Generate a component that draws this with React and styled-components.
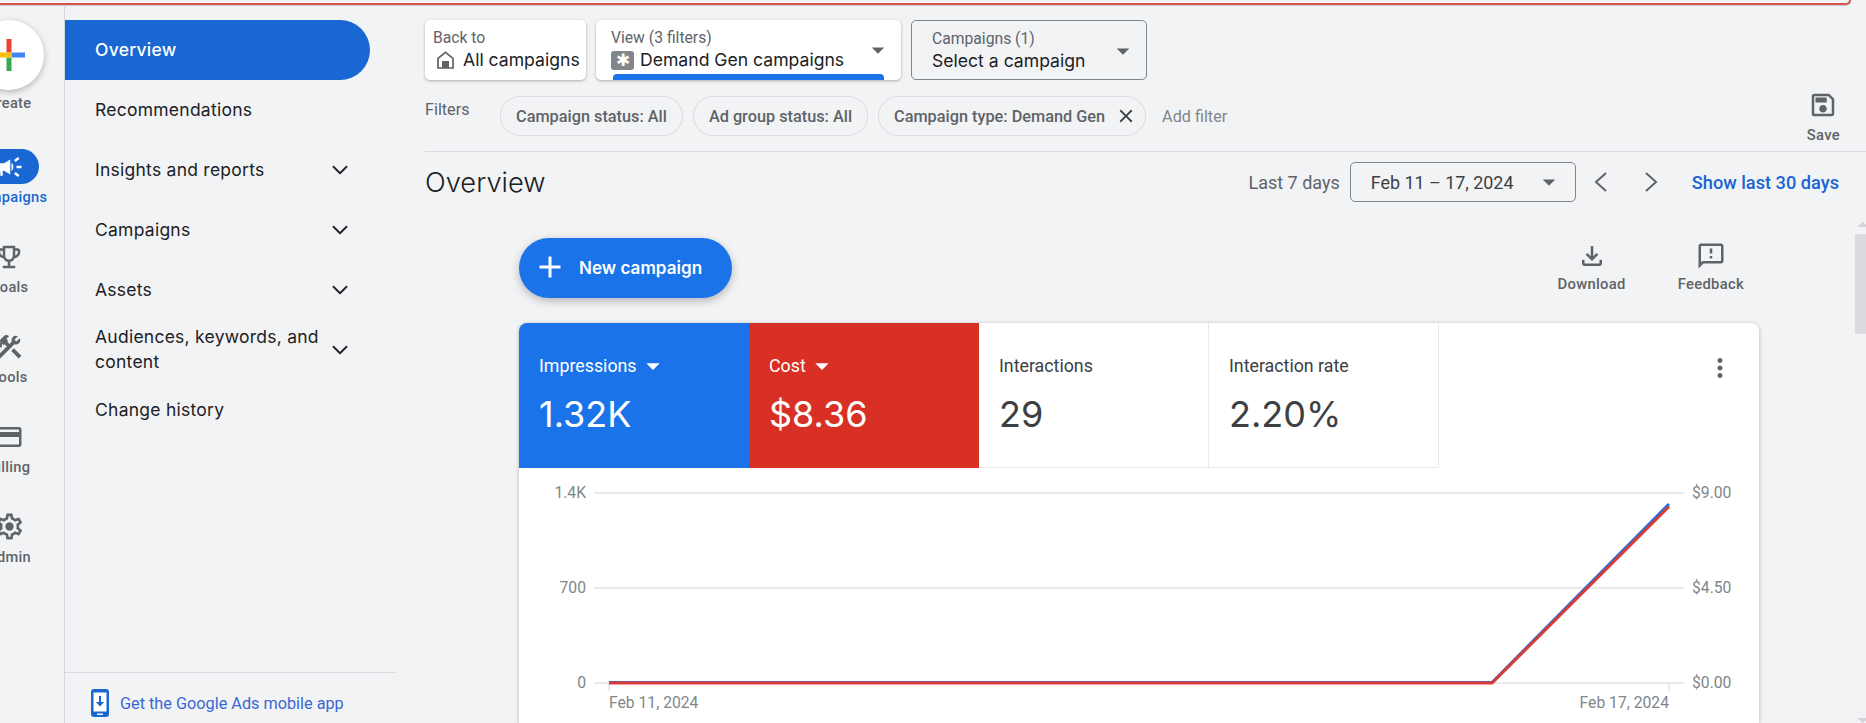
import React from "react";
import styled, { createGlobalStyle } from "styled-components";
import {
  MdArrowDropDown,
  MdCampaign,
  MdAdd,
  MdClose,
  MdConstruction,
  MdMoreVert,
  MdOutlineCreditCard,
  MdOutlineEmojiEvents,
  MdOutlineFeedback,
  MdOutlineFileDownload,
  MdOutlineSave,
} from "react-icons/md";
import { ChevronDown } from "lucide-react";

const sans = `Inter, "Noto Sans", sans-serif`;
const roboto = `Roboto, "Liberation Sans", sans-serif`;

const GlobalStyle = createGlobalStyle`
  html, body {
    margin: 0;
    padding: 0;
    height: 100%;
    overflow: hidden;
    background: #f1f3f4;
  }
  * { box-sizing: border-box; }
`;

const Page = styled.div`
  position: relative;
  width: 1866px;
  height: 723px;
  overflow: hidden;
  display: flex;
  flex-direction: column;
  background: #f2f3f5;
  font-family: ${roboto};
`;

const AlertEdge = styled.div`
  flex: none;
  width: 1851px;
  height: 5px;
  border-bottom: 2px solid #d9534f;
  border-right: 2px solid #d9534f;
  border-bottom-right-radius: 6px;
  box-shadow: 0 1px 0 #c9ccd0;
`;

const Body = styled.div`
  flex: 1;
  min-height: 0;
  display: flex;
`;

const Rail = styled.aside`
  flex: none;
  width: 65px;
  overflow: hidden;
  border-right: 1px solid #d5d7da;
`;

const RailInner = styled.div`
  width: 110px;
  margin-left: -46px;
  padding-top: 15px;
  display: flex;
  flex-direction: column;
  align-items: center;
`;

const CreateCircle = styled.div`
  width: 70px;
  height: 70px;
  border-radius: 50%;
  background: #fff;
  box-shadow: 0 2px 6px rgba(60, 64, 67, 0.35);
  display: flex;
  align-items: center;
  justify-content: center;
`;

const RailItem = styled.div`
  width: 110px;
  height: 90px;
  display: flex;
  flex-direction: column;
  align-items: center;
  flex: none;
`;

const CreateItem = styled(RailItem)`
  height: 129px;
`;

const RailIcon = styled.div`
  width: 60px;
  height: 35px;
  flex: none;
  border-radius: 18px;
  display: flex;
  align-items: center;
  justify-content: center;
  color: ${(p) => (p.$active ? "#fff" : "#5f6368")};
  background: ${(p) => (p.$active ? "#1967d2" : "transparent")};
`;

const RailLabel = styled.div`
  margin-top: 3px;
  font-size: 14.6px;
  line-height: 20px;
  font-weight: 500;
  letter-spacing: 0.3px;
  white-space: nowrap;
  color: ${(p) => (p.$active ? "#1967d2" : "#5f6368")};
`;

const Nav = styled.nav`
  flex: none;
  width: 331px;
  padding-top: 15px;
  display: flex;
  flex-direction: column;
`;

const NavItem = styled.div`
  flex: none;
  width: ${(p) => (p.$active ? "305px" : "100%")};
  height: 60px;
  padding: 0 43px 2px 30px;
  display: flex;
  align-items: center;
  justify-content: space-between;
  font-family: ${sans};
  font-size: 17.5px;
  line-height: 25px;
  letter-spacing: 0.25px;
  color: ${(p) => (p.$active ? "#fff" : "#202124")};
  font-weight: ${(p) => (p.$active ? 500 : 400)};
  background: ${(p) => (p.$active ? "#1967d2" : "transparent")};
  border-radius: ${(p) => (p.$active ? "0 30px 30px 0" : "0")};
`;

const NavText = styled.span`
  max-width: 230px;
`;

const NavChevron = styled(ChevronDown)`
  flex: none;
  margin-top: 2px;
`;

const NavFooter = styled.div`
  margin-top: auto;
  height: 51px;
  padding: 10px 0 0 26px;
  border-top: 1px solid #d9dadd;
  display: flex;
  align-items: center;
  gap: 11px;
  font-size: 16.25px;
  color: #3a67d1;
`;

const Main = styled.main`
  flex: 1;
  min-width: 0;
  padding: 15px 26px 0 29px;
`;

const SelectorRow = styled.div`
  display: flex;
  gap: 10px;
`;

const SelectorCard = styled.div`
  height: 60px;
  width: ${(p) => p.$width}px;
  padding: 8px 8px 0 ${(p) => p.$inset}px;
  border-radius: 5px;
  display: flex;
  flex-direction: column;
  color: #202124;
  background: ${(p) => (p.$outlined ? "transparent" : "#fff")};
  border: ${(p) => (p.$outlined ? "1px solid #80868b" : "none")};
  box-shadow: ${(p) =>
    p.$outlined ? "none" : "0 1px 3px rgba(60, 64, 67, 0.4)"};
`;

const CardTop = styled.div`
  display: flex;
  align-items: center;
  justify-content: space-between;
`;

const CardCaption = styled.div`
  font-size: 15.7px;
  line-height: 20px;
  color: #5f6368;
`;

const CardValue = styled.div`
  display: flex;
  align-items: center;
  gap: 6px;
  font-family: ${sans};
  font-size: 17.6px;
  line-height: 24px;
  white-space: nowrap;
`;

const HomeGlyph = styled.svg`
  flex: none;
  margin: 0 3px 0 4px;
  color: #5f6368;
`;

const Caret = styled(MdArrowDropDown)`
  flex: none;
  color: #5f6368;
`;

const GemBadge = styled.span`
  width: 23px;
  height: 19px;
  border-radius: 3px;
  background: #80868b;
  color: #fff;
  display: flex;
  align-items: center;
  justify-content: center;
  font-size: 17px;
  line-height: 19px;
`;

const ActiveBar = styled.div`
  margin-top: auto;
  margin-left: 2px;
  width: 271px;
  height: 6px;
  background: #1a73e8;
  border-radius: 4px 4px 0 0;
`;

const FilterRow = styled.div`
  margin: 16px -26px 0 0;
  padding-right: 26px;
  height: 56px;
  border-bottom: 1px solid #d9dadd;
  display: flex;
  position: relative;
`;

const FilterLabel = styled.div`
  width: 75px;
  font-size: 16.2px;
  line-height: 27px;
  color: #5f6368;
`;

const Chip = styled.div`
  height: 40px;
  margin-right: 10px;
  padding: 0 ${(p) => (p.$closable ? "8px" : "15px")} 0 15px;
  border: 1px solid #dadce0;
  border-radius: 20px;
  display: flex;
  align-items: center;
  gap: 10px;
  font-size: 16.3px;
  font-weight: 500;
  color: #5f6368;
  white-space: nowrap;
`;

const AddFilter = styled.div`
  margin-left: 6px;
  height: 40px;
  display: flex;
  align-items: center;
  font-size: 16.2px;
  color: #80868b;
`;

const SaveAction = styled.div`
  margin-left: auto;
  margin-top: -6px;
`;

const Action = styled.div`
  display: flex;
  flex-direction: column;
  align-items: center;
  gap: ${(p) => p.$gap}px;
  font-size: 14.8px;
  line-height: 20px;
  font-weight: 500;
  letter-spacing: 0.3px;
  color: #5f6368;
`;

const HeaderRow = styled.div`
  margin-top: 10px;
  height: 40px;
  display: flex;
  align-items: center;
`;

const Title = styled.h1`
  margin: 0 auto 0 0;
  font-family: ${sans};
  font-size: 27.3px;
  font-weight: 300;
  color: #202124;
`;

const RangeLabel = styled.div`
  margin-right: 10px;
  font-size: 18px;
  color: #5f6368;
`;

const DateSelect = styled.div`
  width: 226px;
  height: 40px;
  padding: 0 11px 0 20px;
  border: 1px solid #80868b;
  border-radius: 5px;
  display: flex;
  align-items: center;
  justify-content: space-between;
  font-size: 17.9px;
  color: #3c4043;
`;

const PagerIcon = styled.svg`
  margin-left: ${(p) => p.$gap}px;
  flex: none;
  color: #5f6368;
`;

const RangeLink = styled.div`
  margin: 0 1px 0 34px;
  font-size: 18.2px;
  font-weight: 500;
  color: #1a63d3;
`;

const Content = styled.section`
  margin-left: 94px;
  width: 1240px;
`;

const Toolbar = styled.div`
  margin-top: 36px;
  height: 60px;
  display: flex;
  align-items: center;
`;

const NewCampaign = styled.div`
  width: 213px;
  height: 60px;
  padding: 0 0 2px 13px;
  margin-right: auto;
  border-radius: 30px;
  background: #1a73e8;
  color: #fff;
  box-shadow: 0 3px 8px rgba(60, 64, 67, 0.35);
  display: flex;
  align-items: center;
  gap: 11px;
  font-family: ${sans};
  font-size: 17.1px;
  font-weight: 600;
`;

const ToolbarActions = styled.div`
  display: flex;
  gap: 52px;
  margin: -1px 15px 0 0;
`;

const Card = styled.div`
  margin-top: 25px;
  background: #fff;
  border-radius: 8px 8px 0 0;
  box-shadow: 0 1px 4px rgba(60, 64, 67, 0.35);
`;

const TabRow = styled.div`
  display: flex;
  height: 145px;
  position: relative;
`;

const Tab = styled.div`
  width: 230px;
  padding: 32px 0 0 20px;
  color: ${(p) => (p.$bg ? "#fff" : "#3c4043")};
  background: ${(p) => p.$bg || "#fff"};
  border-right: ${(p) => (p.$bg ? "none" : "1px solid #e8eaed")};
  border-bottom: ${(p) => (p.$bg ? "none" : "1px solid #e8eaed")};
  border-top-left-radius: ${(p) => (p.$first ? "8px" : "0")};
`;

const TabLabel = styled.div`
  height: 22px;
  display: flex;
  align-items: center;
  font-size: 17.8px;
  line-height: 22px;
`;

const TabValue = styled.div`
  margin-top: 13px;
  font-family: ${sans};
  font-size: 36px;
  line-height: 48px;
  font-weight: 400;
`;

const Kebab = styled.div`
  margin-left: auto;
  padding: 30px 24px 0 0;
  color: #5f6368;
`;

const Chart = styled.svg`
  display: block;
  font-family: ${roboto};
  font-size: 15.7px;
  fill: #80868b;
`;

const ScrollThumb = styled.div`
  position: absolute;
  right: 0;
  top: 234px;
  width: 11px;
  height: 100px;
  background: #dadce0;
`;

const ScrollArrow = styled.div`
  position: absolute;
  right: -3px;
  top: ${(p) => p.$top}px;
  width: 0;
  height: 0;
  border-left: 6px solid transparent;
  border-right: 6px solid transparent;
  border-bottom: ${(p) => (p.$down ? "none" : "5px solid #d2d4d7")};
  border-top: ${(p) => (p.$down ? "5px solid #d2d4d7" : "none")};
`;

function GearIcon() {
  return (
    <svg width="31" height="31" viewBox="0 0 24 24" fill="currentColor">
      <path d="M19.43 12.98c.04-.32.07-.64.07-.98 0-.34-.03-.66-.07-.98l2.11-1.65c.19-.15.24-.42.12-.64l-2-3.46a.5.5 0 0 0-.61-.22l-2.49 1c-.52-.4-1.08-.73-1.69-.98l-.38-2.65A.488.488 0 0 0 14 2h-4c-.25 0-.46.18-.49.42l-.38 2.65c-.61.25-1.17.59-1.69.98l-2.49-1a.566.566 0 0 0-.18-.03c-.17 0-.34.09-.43.25l-2 3.46c-.13.22-.07.49.12.64l2.11 1.65c-.04.32-.07.65-.07.98 0 .33.03.66.07.98l-2.11 1.65c-.19.15-.24.42-.12.64l2 3.46a.5.5 0 0 0 .61.22l2.49-1c.52.4 1.08.73 1.69.98l.38 2.65c.03.24.24.42.49.42h4c.25 0 .46-.18.49-.42l.38-2.65c.61-.25 1.17-.59 1.69-.98l2.49 1c.06.02.12.03.18.03.17 0 .34-.09.43-.25l2-3.46c.12-.22.07-.49-.12-.64l-2.11-1.65zm-1.98-1.71c.04.31.05.52.05.73 0 .21-.02.43-.05.73l-.14 1.13.89.7 1.08.84-.7 1.21-1.27-.51-1.04-.42-.9.68c-.43.32-.84.56-1.25.73l-1.06.43-.16 1.13-.2 1.35h-1.4l-.19-1.35-.16-1.13-1.06-.43c-.43-.18-.83-.41-1.23-.71l-.91-.7-1.06.43-1.27.51-.7-1.21 1.08-.84.89-.7-.14-1.13c-.03-.31-.05-.54-.05-.74s.02-.43.05-.73l.14-1.13-.89-.7-1.08-.84.7-1.21 1.27.51 1.04.42.9-.68c.43-.32.84-.56 1.25-.73l1.06-.43.16-1.13.2-1.35h1.39l.19 1.35.16 1.13 1.06.43c.43.18.83.41 1.23.71l.91.7 1.06-.43 1.27-.51.7 1.21-1.07.85-.89.7.14 1.13z" />
      <circle cx="12" cy="12" r="3.2" />
    </svg>
  );
}

const railItems = [
  { label: "Campaigns", icon: <MdCampaign size={30} />, active: true },
  { label: "Goals", icon: <MdOutlineEmojiEvents size={30} /> },
  { label: "Tools", icon: <MdConstruction size={30} /> },
  { label: "Billing", icon: <MdOutlineCreditCard size={30} /> },
  { label: "Admin", icon: <GearIcon /> },
];

const navItems = [
  { label: "Overview", active: true },
  { label: "Recommendations" },
  { label: "Insights and reports", more: true },
  { label: "Campaigns", more: true },
  { label: "Assets", more: true },
  { label: "Audiences, keywords, and content", more: true },
  { label: "Change history" },
];

const tabs = [
  { label: "Impressions", value: "1.32K", bg: "#1a73e8", menu: true },
  { label: "Cost", value: "$8.36", bg: "#d93025", menu: true },
  { label: "Interactions", value: "29" },
  { label: "Interaction rate", value: "2.20%" },
];

function GooglePlus() {
  return (
    <svg width="32" height="32" viewBox="0 0 32 32">
      <rect x="13.5" y="0" width="5" height="13.5" fill="#ea4335" />
      <rect x="18.5" y="13.5" width="13.5" height="5" fill="#4285f4" />
      <rect x="13.5" y="18.5" width="5" height="13.5" fill="#34a853" />
      <rect x="0" y="13.5" width="18.5" height="5" fill="#fbbc04" />
    </svg>
  );
}

function PhoneIcon() {
  return (
    <svg width="18" height="28" viewBox="0 0 18 28">
      <rect width="18" height="28" rx="3" fill="#1a67d2" />
      <rect x="2.5" y="3.5" width="13" height="19" fill="#fff" />
      <path d="M8 7h2v6h3l-4 4.5L5 13h3z" fill="#1a67d2" />
      <rect x="6" y="24.5" width="6" height="1.4" fill="#fff" />
    </svg>
  );
}

function HomeIcon() {
  return (
    <HomeGlyph width="17" height="18" viewBox="0 0 17 18">
      <path
        d="M8.5 1.3L16 7.4V17H1V7.4z"
        fill="none"
        stroke="currentColor"
        strokeWidth="1.7"
      />
      <rect x="5" y="10" width="7" height="7" fill="currentColor" />
    </HomeGlyph>
  );
}

function Pager({ dir, gap }) {
  return (
    <PagerIcon width="14" height="20" viewBox="0 0 14 20" $gap={gap}>
      <path
        d={dir === "left" ? "M12 1L2 10l10 9" : "M2 1l10 9-10 9"}
        fill="none"
        stroke="currentColor"
        strokeWidth="2"
      />
    </PagerIcon>
  );
}

export default function App() {
  return (
    <Page>
      <GlobalStyle />
      <AlertEdge />
      <Body>
        <Rail>
          <RailInner>
            <CreateItem>
              <CreateCircle>
                <GooglePlus />
              </CreateCircle>
              <RailLabel>Create</RailLabel>
            </CreateItem>
            {railItems.map((item) => (
              <RailItem key={item.label}>
                <RailIcon $active={item.active}>{item.icon}</RailIcon>
                <RailLabel $active={item.active}>{item.label}</RailLabel>
              </RailItem>
            ))}
          </RailInner>
        </Rail>

        <Nav>
          {navItems.map((item) => (
            <NavItem key={item.label} $active={item.active}>
              <NavText>{item.label}</NavText>
              {item.more && <NavChevron size={26} strokeWidth={1.7} />}
            </NavItem>
          ))}
          <NavFooter>
            <PhoneIcon />
            Get the Google Ads mobile app
          </NavFooter>
        </Nav>

        <Main>
          <SelectorRow>
            <SelectorCard $width={161} $inset={8}>
              <CardCaption>Back to</CardCaption>
              <CardValue>
                <HomeIcon />
                All campaigns
              </CardValue>
            </SelectorCard>
            <SelectorCard $width={305} $inset={15}>
              <CardTop>
                <div>
                  <CardCaption>View (3 filters)</CardCaption>
                  <CardValue>
                    <GemBadge>✱</GemBadge>
                    Demand Gen campaigns
                  </CardValue>
                </div>
                <Caret size={30} />
              </CardTop>
              <ActiveBar />
            </SelectorCard>
            <SelectorCard $width={236} $inset={20} $outlined>
              <CardTop>
                <div>
                  <CardCaption>Campaigns (1)</CardCaption>
                  <CardValue>Select a campaign</CardValue>
                </div>
                <Caret size={30} />
              </CardTop>
            </SelectorCard>
          </SelectorRow>

          <FilterRow>
            <FilterLabel>Filters</FilterLabel>
            <Chip>Campaign status: All</Chip>
            <Chip>Ad group status: All</Chip>
            <Chip $closable>
              Campaign type: Demand Gen
              <MdClose size={22} color="#3c4043" />
            </Chip>
            <AddFilter>Add filter</AddFilter>
            <SaveAction>
              <Action $gap={5}>
                <MdOutlineSave size={30} />
                Save
              </Action>
            </SaveAction>
          </FilterRow>

          <HeaderRow>
            <Title>Overview</Title>
            <RangeLabel>Last 7 days</RangeLabel>
            <DateSelect>
              Feb 11 – 17, 2024
              <Caret size={30} />
            </DateSelect>
            <Pager dir="left" gap={18} />
            <Pager dir="right" gap={36} />
            <RangeLink>Show last 30 days</RangeLink>
          </HeaderRow>

          <Content>
            <Toolbar>
              <NewCampaign>
                <MdAdd size={36} />
                New campaign
              </NewCampaign>
              <ToolbarActions>
                <Action $gap={3}>
                  <MdOutlineFileDownload size={30} />
                  Download
                </Action>
                <Action $gap={3}>
                  <MdOutlineFeedback size={30} />
                  Feedback
                </Action>
              </ToolbarActions>
            </Toolbar>

            <Card>
              <TabRow>
                {tabs.map((tab, i) => (
                  <Tab key={tab.label} $bg={tab.bg} $first={i === 0}>
                    <TabLabel>
                      {tab.label}
                      {tab.menu && <MdArrowDropDown size={32} />}
                    </TabLabel>
                    <TabValue>{tab.value}</TabValue>
                  </Tab>
                ))}
                <Kebab>
                  <MdMoreVert size={30} />
                </Kebab>
              </TabRow>
              <Chart width="1240" height="255" viewBox="0 0 1240 255">
                <g stroke="#e8eaed" strokeWidth="2">
                  <line x1="75" x2="1165" y1="25" y2="25" />
                  <line x1="75" x2="1165" y1="120" y2="120" />
                  <line x1="75" x2="1165" y1="215" y2="215" />
                  <line x1="90" x2="90" y1="215" y2="223" />
                  <line x1="1150" x2="1150" y1="215" y2="223" />
                </g>
                <g textAnchor="end">
                  <text x="67" y="30">1.4K</text>
                  <text x="67" y="125">700</text>
                  <text x="67" y="220">0</text>
                </g>
                <text x="1173" y="30">$9.00</text>
                <text x="1173" y="125">$4.50</text>
                <text x="1173" y="220">$0.00</text>
                <text x="90" y="240">Feb 11, 2024</text>
                <text x="1150" y="240" textAnchor="end">Feb 17, 2024</text>
                <polyline
                  points="90,214.5 973,214.5 1150,36"
                  fill="none"
                  stroke="#1a73e8"
                  strokeWidth="3"
                />
                <polyline
                  points="90,215 973,215 1150,38.5"
                  fill="none"
                  stroke="#d93b35"
                  strokeWidth="3"
                />
              </Chart>
            </Card>
          </Content>
        </Main>
      </Body>
      <ScrollArrow $top={222} />
      <ScrollThumb />
      <ScrollArrow $top={718} $down />
    </Page>
  );
}
